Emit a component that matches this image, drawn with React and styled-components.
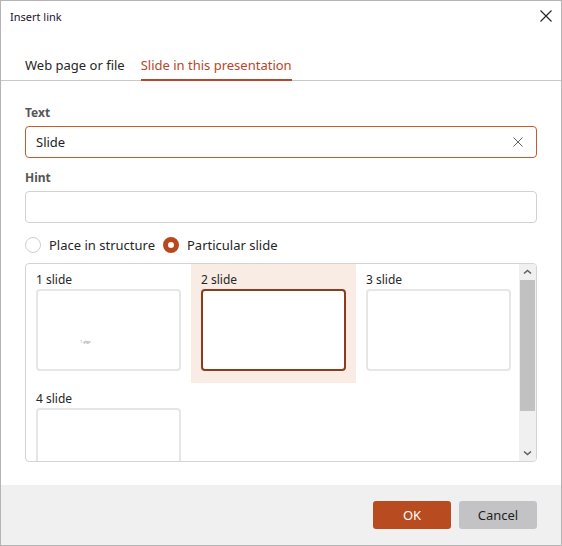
import React from "react";
import styled, { createGlobalStyle } from "styled-components";

const ACCENT = "#b7472a";
const FONT = `"Segoe UI", "Noto Sans", "Open Sans", sans-serif`;

const GlobalStyle = createGlobalStyle`
  html, body {
    margin: 0;
    padding: 0;
    background: #ffffff;
  }
  body {
    font-family: ${FONT};
    color: #242424;
  }
  * {
    box-sizing: border-box;
  }
`;

const slides = [
  { id: 1, preview: "1. glgjo" },
  { id: 2 },
  { id: 3 },
  { id: 4 },
];

const CrossIcon = ({ size = 12, stroke = "#333" }) => (
  <svg width={size} height={size} viewBox="0 0 12 12">
    <path d="M0.5 0.5 L11.5 11.5 M11.5 0.5 L0.5 11.5" stroke={stroke} strokeWidth="1.1" fill="none" />
  </svg>
);

const Chevron = ({ down }) => (
  <svg width="9" height="6" viewBox="0 0 9 6">
    <path
      d={down ? "M1 1.5 L4.5 4.5 L8 1.5" : "M1 4.5 L4.5 1.5 L8 4.5"}
      stroke="#606060"
      strokeWidth="1.6"
      fill="none"
    />
  </svg>
);

const App = () => {
  return (
    <>
      <GlobalStyle />
      <Dialog>
        <TitleBar>
          <Title>Insert link</Title>
          <CloseButton aria-label="Close">
            <CrossIcon size={12} stroke="#222" />
          </CloseButton>
        </TitleBar>

        <Tabs>
          <Tab>Web page or file</Tab>
          <Tab $active>Slide in this presentation</Tab>
        </Tabs>

        <Body>
          <Label>Text</Label>
          <Field $focused>
            <FieldValue>Slide</FieldValue>
            <ClearButton aria-label="Clear">
              <CrossIcon size={10} stroke="#555" />
            </ClearButton>
          </Field>

          <Label>Hint</Label>
          <Field />

          <RadioRow>
            <RadioOption>
              <Radio />
              Place in structure
            </RadioOption>
            <RadioOption>
              <Radio $checked />
              Particular slide
            </RadioOption>
          </RadioRow>

          <SlideBox>
            <SlideGrid>
              {slides.map((s) => (
                <SlideCell key={s.id} $selected={s.id === 2}>
                  <SlideLabel>{s.id} slide</SlideLabel>
                  <Thumb $selected={s.id === 2}>
                    {s.preview && <ThumbText>{s.preview}</ThumbText>}
                  </Thumb>
                </SlideCell>
              ))}
            </SlideGrid>
            <Scrollbar>
              <ScrollArrow>
                <Chevron />
              </ScrollArrow>
              <ScrollTrack>
                <ScrollThumb />
              </ScrollTrack>
              <ScrollArrow>
                <Chevron down />
              </ScrollArrow>
            </Scrollbar>
          </SlideBox>
        </Body>

        <Footer>
          <Button $primary>OK</Button>
          <Button>Cancel</Button>
        </Footer>
      </Dialog>
    </>
  );
};

const Dialog = styled.div`
  width: 562px;
  height: 546px;
  border: 1px solid #b4b4b4;
  background: #ffffff;
  display: flex;
  flex-direction: column;
`;

const TitleBar = styled.div`
  height: 30px;
  display: flex;
  align-items: center;
  justify-content: space-between;
  padding: 0 9px;
`;

const Title = styled.div`
  font-size: 11px;
  color: #1b1030;
`;

const CloseButton = styled.div`
  width: 12px;
  height: 12px;
  display: flex;
`;

const Tabs = styled.div`
  margin-top: 19px;
  height: 31px;
  display: flex;
  gap: 16px;
  padding-left: 24px;
  border-bottom: 1px solid #c8c8c8;
`;

const Tab = styled.div`
  font-size: 13px;
  line-height: 30px;
  color: ${(p) => (p.$active ? ACCENT : "#262626")};
  border-bottom: 2px solid ${(p) => (p.$active ? ACCENT : "transparent")};
  height: 31px;
`;

const Body = styled.div`
  flex: 1;
  padding: 24px 24px 0;
  display: flex;
  flex-direction: column;
`;

const Label = styled.div`
  font-size: 12px;
  font-weight: 700;
  color: #555555;
  line-height: 16px;
  margin-bottom: 5px;
`;

const Field = styled.div`
  height: 32px;
  flex-shrink: 0;
  border: 1px solid ${(p) => (p.$focused ? "#c65a2b" : "#d2d2d2")};
  border-radius: 4px;
  display: flex;
  align-items: center;
  padding: 0 13px 0 10px;
  margin-bottom: 12px;
`;

const FieldValue = styled.div`
  flex: 1;
  font-size: 13px;
  color: #222;
`;

const ClearButton = styled.div`
  display: flex;
  align-items: center;
`;

const RadioRow = styled.div`
  display: flex;
  gap: 8px;
  height: 20px;
  align-items: center;
  margin-bottom: 8px;
`;

const RadioOption = styled.div`
  display: flex;
  align-items: center;
  gap: 8px;
  font-size: 13px;
  color: #262626;
`;

const Radio = styled.span`
  width: 16px;
  height: 16px;
  border-radius: 50%;
  display: inline-block;
  background: #fff;
  border: ${(p) => (p.$checked ? `5px solid #b9491d` : "1px solid #cfcfcf")};
`;

const SlideBox = styled.div`
  height: 199px;
  flex-shrink: 0;
  border: 1px solid #d4d4d4;
  border-radius: 4px;
  display: flex;
  overflow: hidden;
`;

const SlideGrid = styled.div`
  flex: 1;
  display: grid;
  grid-template-columns: repeat(3, 165px);
  align-content: start;
  overflow: hidden;
`;

const SlideCell = styled.div`
  padding: 8px 10px 12px 10px;
  background: ${(p) => (p.$selected ? "#f9ece4" : "transparent")};
`;

const SlideLabel = styled.div`
  font-size: 12px;
  line-height: 16px;
  color: #262626;
  margin-bottom: 1px;
`;

const Thumb = styled.div`
  width: 145px;
  height: 82px;
  background: #ffffff;
  border: 2px solid ${(p) => (p.$selected ? "#8c3b1c" : "#e6e6e6")};
  border-radius: 4px;
  display: flex;
  align-items: center;
  justify-content: center;
`;

const ThumbText = styled.span`
  font-size: 3px;
  color: #777;
  margin-right: 46px;
  margin-top: 24px;
`;

const Scrollbar = styled.div`
  width: 17px;
  background: #f0f0f0;
  display: flex;
  flex-direction: column;
`;

const ScrollArrow = styled.div`
  height: 16px;
  display: flex;
  align-items: center;
  justify-content: center;
`;

const ScrollTrack = styled.div`
  flex: 1;
  padding: 0 1px;
`;

const ScrollThumb = styled.div`
  height: 131px;
  background: #c1c1c1;
`;

const Footer = styled.div`
  height: 60px;
  background: #f0f0f0;
  display: flex;
  justify-content: flex-end;
  align-items: center;
  gap: 8px;
  padding: 0 24px 0 0;
`;

const Button = styled.div`
  width: 78px;
  height: 28px;
  border-radius: 3px;
  display: flex;
  align-items: center;
  justify-content: center;
  font-size: 13px;
  background: ${(p) => (p.$primary ? "#b84c20" : "#c3c3c5")};
  color: ${(p) => (p.$primary ? "#ffffff" : "#1f1f1f")};
`;

export default App;
